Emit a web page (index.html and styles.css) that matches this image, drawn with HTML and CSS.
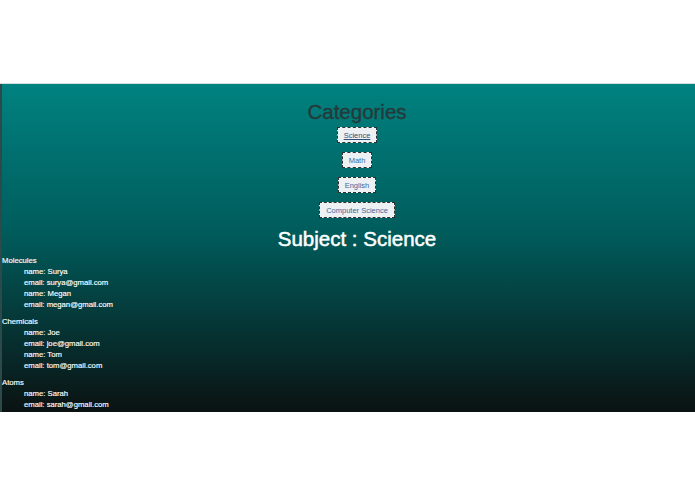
FILE: index.html
```html
<!DOCTYPE html>
<html>
<head>
<meta charset="utf-8">
<link rel="stylesheet" href="styles.css">
</head>
<body>
<div class="top"></div>
<main class="app">
  <div class="center">
    <h1 class="title">Categories</h1>
    <div class="cats">
      <button class="cat active">Science</button>
      <button class="cat">Math</button>
      <button class="cat">English</button>
      <button class="cat">Computer Science</button>
    </div>
    <h2 class="subject">Subject : Science</h2>
  </div>
  <div class="groups">
    <div class="group">
      <div class="gname">Molecules</div>
      <div class="item">name: Surya</div>
      <div class="item">email: surya@gmail.com</div>
      <div class="item">name: Megan</div>
      <div class="item">email: megan@gmail.com</div>
    </div>
    <div class="group">
      <div class="gname">Chemicals</div>
      <div class="item">name: Joe</div>
      <div class="item">email: joe@gmail.com</div>
      <div class="item">name: Tom</div>
      <div class="item">email: tom@gmail.com</div>
    </div>
    <div class="group">
      <div class="gname">Atoms</div>
      <div class="item">name: Sarah</div>
      <div class="item">email: sarah@gmail.com</div>
    </div>
  </div>
</main>
</body>
</html>
```
FILE: styles.css
```css
html, body {
  margin: 0;
  padding: 0;
  background: #ffffff;
  font-family: "Liberation Sans", Arial, sans-serif;
}
.top {
  height: 83px;
  border-bottom: 1px solid #d6dcdc;
}
.app {
  height: 328px;
  background: linear-gradient(#008280 0%, #005c5c 45%, #0b1212 100%);
  border-left: 2px solid #2c4a4a;
  overflow: hidden;
  display: flex;
  flex-direction: column;
}
.center {
  display: flex;
  flex-direction: column;
  align-items: center;
  padding-left: 17px;
}
.title {
  margin: 16px 0 0;
  font-size: 20.5px;
  line-height: 24px;
  font-weight: normal;
  color: #243a3b;
  -webkit-text-stroke: 0.4px #243a3b;
}
.cats {
  margin-top: 3px;
  display: flex;
  flex-direction: column;
  align-items: center;
  gap: 9px;
}
.cat {
  font-family: "Liberation Sans", Arial, sans-serif;
  font-size: 7.5px;
  line-height: 9px;
  height: 16px;
  padding: 2px 6px;
  margin: 0;
  color: #3a68a0;
  background: #eef1f3;
  border: 1.5px dashed #2a3232;
  border-radius: 0;
}
.cat.active {
  text-decoration: underline;
  color: #2f4f7a;
}
.subject {
  margin: 9px 0 0;
  font-size: 20.5px;
  line-height: 24px;
  font-weight: normal;
  color: #ffffff;
  -webkit-text-stroke: 0.5px #ffffff;
}
.groups {
  margin-top: 4px;
  display: flex;
  flex-direction: column;
  gap: 6px;
  color: #ffffff;
  font-size: 7.7px;
  line-height: 11px;
  -webkit-text-stroke: 0.15px #ffffff;
}
.item {
  padding-left: 22px;
}
```
